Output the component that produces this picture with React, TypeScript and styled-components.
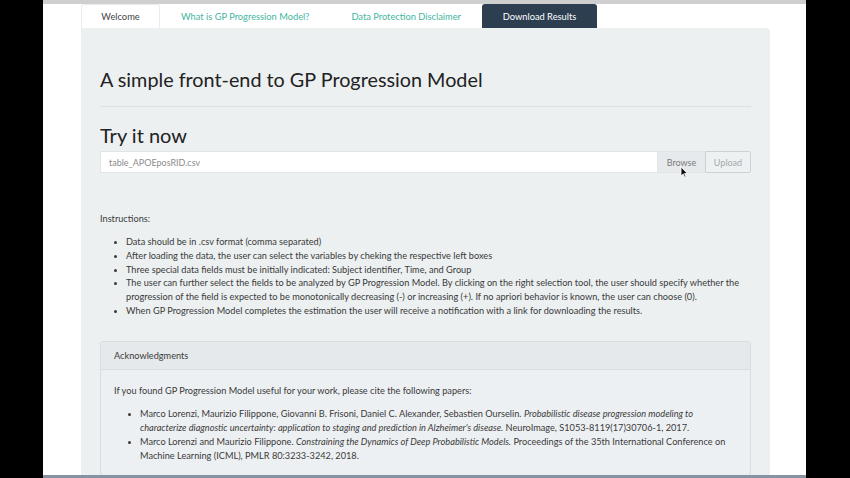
import styled, { createGlobalStyle } from 'styled-components';

const GlobalStyle = createGlobalStyle`
  html, body {
    margin: 0;
    padding: 0;
    background: #000;
    overflow: hidden;
  }
  body {
    font-family: Lato, "Open Sans", "Liberation Sans", sans-serif;
    color: #333;
  }
`;

const tabs = [
  { label: 'Welcome', kind: 'active' },
  { label: 'What is GP Progression Model?', kind: 'link' },
  { label: 'Data Protection Disclaimer', kind: 'link' },
  { label: 'Download Results', kind: 'dark' },
] as const;

const instructions = [
  'Data should be in .csv format (comma separated)',
  'After loading the data, the user can select the variables by cheking the respective left boxes',
  'Three special data fields must be initially indicated: Subject identifier, Time, and Group',
  'The user can further select the fields to be analyzed by GP Progression Model. By clicking on the right selection tool, the user should specify whether the progression of the field is expected to be monotonically decreasing (-) or increasing (+). If no apriori behavior is known, the user can choose (0).',
  'When GP Progression Model completes the estimation the user will receive a notification with a link for downloading the results.',
];

function App() {
  return (
    <Screen>
      <GlobalStyle />
      <Page>
        <TopStrip />
        <Container>
          <TabBar>
            {tabs.map((t) => (
              <Tab key={t.label} $kind={t.kind}>
                {t.label}
              </Tab>
            ))}
          </TabBar>
          <Well>
            <Title>A simple front-end to GP Progression Model</Title>
            <Rule />
            <SubTitle>Try it now</SubTitle>
            <InputGroup>
              <FileField>table_APOEposRID.csv</FileField>
              <BrowseButton>
                Browse
                <Cursor width="8" height="12" viewBox="0 0 8 12">
                  <path d="M1 1 L1 10 L3.2 8 L4.8 11.3 L6 10.7 L4.5 7.5 L7.2 7.3 Z" fill="#111" stroke="#fff" strokeWidth="0.8" />
                </Cursor>
              </BrowseButton>
              <UploadButton>Upload</UploadButton>
            </InputGroup>
            <Paragraph $top={39}>Instructions:</Paragraph>
            <BulletList $lh={13.8}>
              {instructions.map((item) => (
                <li key={item.slice(0, 20)}>{item}</li>
              ))}
            </BulletList>
            <Panel>
              <PanelHeading>Acknowledgments</PanelHeading>
              <PanelBody>
                <Paragraph $top={0}>
                  If you found GP Progression Model useful for your work, please cite the following papers:
                </Paragraph>
                <BulletList $lh={14}>
                  <li>
                    Marco Lorenzi, Maurizio Filippone, Giovanni B. Frisoni, Daniel C. Alexander, Sebastien Ourselin.{' '}
                    <em>
                      Probabilistic disease progression modeling to characterize diagnostic uncertainty: application to
                      staging and prediction in Alzheimer's disease.
                    </em>{' '}
                    NeuroImage, S1053-8119(17)30706-1, 2017.
                  </li>
                  <li>
                    Marco Lorenzi and Maurizio Filippone. <em>Constraining the Dynamics of Deep Probabilistic Models.</em>{' '}
                    Proceedings of the 35th International Conference on Machine Learning (ICML), PMLR 80:3233-3242, 2018.
                  </li>
                </BulletList>
              </PanelBody>
            </Panel>
          </Well>
        </Container>
        <Taskbar />
      </Page>
    </Screen>
  );
}

export default App;

const Screen = styled.div`
  display: flex;
  width: 850px;
  height: 478px;
  background: #000;
  overflow: hidden;
`;

const Page = styled.div`
  display: flex;
  flex-direction: column;
  margin-left: 43px;
  width: 763px;
  height: 478px;
  background: #fff;
  position: relative;
  overflow: hidden;
`;

const TopStrip = styled.div`
  height: 4px;
  flex-shrink: 0;
  background: #cfcfcf;
`;

const Container = styled.div`
  display: flex;
  flex-direction: column;
  flex: 1;
  min-height: 0;
  padding-left: 38px;
  width: 689px;
`;

const TabBar = styled.div`
  display: flex;
  height: 24px;
  flex-shrink: 0;
`;

const Tab = styled.div<{ $kind: 'active' | 'link' | 'dark' }>`
  display: flex;
  align-items: center;
  justify-content: center;
  box-sizing: border-box;
  padding: 0 20px;
  font-size: 9.3px;
  border-radius: 3px 3px 0 0;
  color: ${(p) => (p.$kind === 'active' ? '#444' : p.$kind === 'dark' ? '#fff' : '#45b5a0')};
  background: ${(p) => (p.$kind === 'active' ? '#fff' : p.$kind === 'dark' ? '#2c3e50' : 'transparent')};
  border: 1px solid ${(p) => (p.$kind === 'active' ? '#e9ecee' : 'transparent')};
  border-bottom: none;
  ${(p) => (p.$kind === 'active' ? 'width: 79px; padding: 0;' : '')}
  ${(p) => (p.$kind === 'dark' ? 'width: 115px; padding: 0;' : '')}
`;

const Well = styled.div`
  flex: 1;
  min-height: 0;
  background: #ecf0f1;
  padding: 40px 19px 0 19px;
  border-radius: 0 4px 0 0;
`;

const Title = styled.h1`
  margin: 0;
  font-size: 19.8px;
  font-weight: 400;
  line-height: 23px;
  color: #222;
`;

const Rule = styled.hr`
  margin: 15px 0 17px;
  border: none;
  border-top: 1px solid #dde1e3;
`;

const SubTitle = styled.h2`
  margin: 0;
  font-size: 20px;
  font-weight: 400;
  line-height: 22px;
  color: #222;
`;

const InputGroup = styled.div`
  display: flex;
  margin-top: 5px;
  height: 22px;
`;

const FileField = styled.div`
  flex: 1;
  display: flex;
  align-items: center;
  padding-left: 8px;
  background: #fff;
  border: 1px solid #e1e4e6;
  border-right: none;
  font-size: 9px;
  color: #8c8c8c;
`;

const BrowseButton = styled.div`
  position: relative;
  display: flex;
  align-items: center;
  justify-content: center;
  width: 47px;
  background: #e7eaec;
  border: 1px solid #e1e4e6;
  border-right: none;
  font-size: 9px;
  color: #7b7b7b;
`;

const Cursor = styled.svg`
  position: absolute;
  left: 22px;
  top: 14px;
`;

const UploadButton = styled.div`
  display: flex;
  align-items: center;
  justify-content: center;
  width: 44px;
  background: #eef1f2;
  border: 1px solid #cdd2d5;
  border-radius: 0 2px 2px 0;
  font-size: 9px;
  color: #a4a9ad;
`;

const Paragraph = styled.p<{ $top: number }>`
  margin: ${(p) => p.$top}px 0 0;
  font-size: 9.2px;
  line-height: 14px;
  color: #3a3a3a;
`;

const BulletList = styled.ul<{ $lh: number }>`
  margin: 9px 0 0;
  padding-left: 26px;
  font-size: 9.2px;
  line-height: ${(p) => p.$lh}px;
  color: #3a3a3a;
  li::marker {
    font-size: 8px;
  }
  em {
    font-style: italic;
  }
`;

const Panel = styled.div`
  margin-top: 23px;
  border: 1px solid #d9dde0;
  border-radius: 3px;
  background: #edf0f2;
`;

const PanelHeading = styled.div`
  height: 27px;
  display: flex;
  align-items: center;
  padding-left: 13px;
  background: #e6e9eb;
  border-bottom: 1px solid #d9dde0;
  font-size: 9.2px;
  color: #3a3a3a;
`;

const PanelBody = styled.div`
  padding: 14px 13px 12px;
`;

const Taskbar = styled.div`
  position: absolute;
  left: 0;
  right: 0;
  bottom: 0;
  height: 3px;
  background: #8793a3;
`;
